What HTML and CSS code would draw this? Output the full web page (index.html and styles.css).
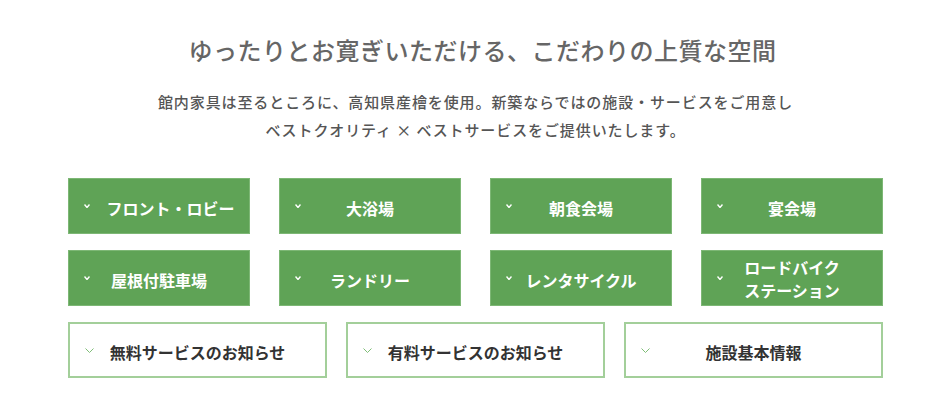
FILE: index.html
```html
<!DOCTYPE html>
<html lang="ja">
<head>
    <meta charset="UTF-8">
    <meta name="viewport" content="width=device-width, initial-scale=1">
    <title>施設のご案内</title>
    <link rel="stylesheet" href="styles.css">
</head>

<body>

<section class="facility">
    <h2 class="facility-title">ゆったりとお寛ぎいただける、こだわりの上質な空間</h2>
    <p class="facility-lead">
        館内家具は至るところに、高知県産檜を使用。新築ならではの施設・サービスをご用意し<br>
        ベストクオリティ × ベストサービスをご提供いたします。
    </p>

    <!-- 館内施設 -->
    <div class="menu menu-four">
        <a class="menu-item" href="#"><span class="label label-front">フロント・ロビー</span></a>
        <a class="menu-item" href="#"><span class="label">大浴場</span></a>
        <a class="menu-item" href="#"><span class="label">朝食会場</span></a>
        <a class="menu-item" href="#"><span class="label">宴会場</span></a>
        <a class="menu-item" href="#"><span class="label">屋根付駐車場</span></a>
        <a class="menu-item" href="#"><span class="label">ランドリー</span></a>
        <a class="menu-item" href="#"><span class="label">レンタサイクル</span></a>
        <a class="menu-item" href="#"><span class="label label-two">ロードバイク<br>ステーション</span></a>
    </div>

    <!-- サービス・情報 -->
    <div class="menu menu-three">
        <a class="menu-item outline" href="#"><span class="label">無料サービスのお知らせ</span></a>
        <a class="menu-item outline" href="#"><span class="label">有料サービスのお知らせ</span></a>
        <a class="menu-item outline" href="#"><span class="label">施設基本情報</span></a>
    </div>
</section>

<script>
    // chevron in front of every menu item
    document.querySelectorAll('.menu-item').forEach(function (item) {
        const outline = item.classList.contains('outline');
        const w = outline ? 9 : 6;
        const h = outline ? 5 : 4;
        item.insertAdjacentHTML('afterbegin',
            '<svg class="chevron" width="' + w + '" height="' + h + '" viewBox="0 0 ' + w + ' ' + h + '">' +
            '<polyline points="0.5,0.5 ' + (w / 2) + ',' + (h - 0.5) + ' ' + (w - 0.5) + ',0.5" fill="none" ' +
            'stroke="currentColor" stroke-width="' + (outline ? 1 : 1.4) + '"/></svg>');
    });
</script>

</body>
</html>
```

FILE: styles.css
```css
body {
    margin: 0;
    font-family: "Noto Sans CJK JP", "Noto Sans", sans-serif;
    background-color: #ffffff;
}
.facility {
    padding-top: 32px;
    text-align: center;
}
.facility-title {
    margin: 0;
    font-size: 24px;
    line-height: 36px;
    font-weight: 500;
    letter-spacing: 0.5px;
    color: #666666;
    padding-left: 14px;
}
.facility-lead {
    margin: 20px 0 0;
    font-size: 15px;
    line-height: 28px;
    font-weight: 500;
    letter-spacing: 0.9px;
    color: #555555;
}
.menu {
    width: 815px;
    margin: 0 auto;
    display: grid;
    row-gap: 16px;
}
.menu-four {
    margin-top: 34px;
    grid-template-columns: repeat(4, 182px);
    column-gap: 29px;
}
.menu-three {
    margin-top: 16px;
    grid-template-columns: repeat(3, 259px);
    column-gap: 19px;
}
.menu-item {
    position: relative;
    height: 56px;
    display: flex;
    align-items: center;
    justify-content: center;
    box-sizing: border-box;
    background-color: #5fa356;
    border: 1px solid #7db775;
    color: #ffffff;
    text-decoration: none;
    font-size: 16px;
    font-weight: 700;
    line-height: 20px;
    padding-top: 3px;
}
.menu-item .chevron {
    position: absolute;
    left: 15px;
    top: 25px;
    color: #ffffff;
}
.menu-item.outline {
    background-color: #ffffff;
    border: 2px solid #a3cf9a;
    color: #333333;
}
.menu-item.outline .chevron {
    left: 15px;
    top: 24px;
    color: #7fbd77;
}
.label-front {
    padding-left: 23px;
}
.label-two {
    line-height: 23px;
    padding-bottom: 2px;
}
```
